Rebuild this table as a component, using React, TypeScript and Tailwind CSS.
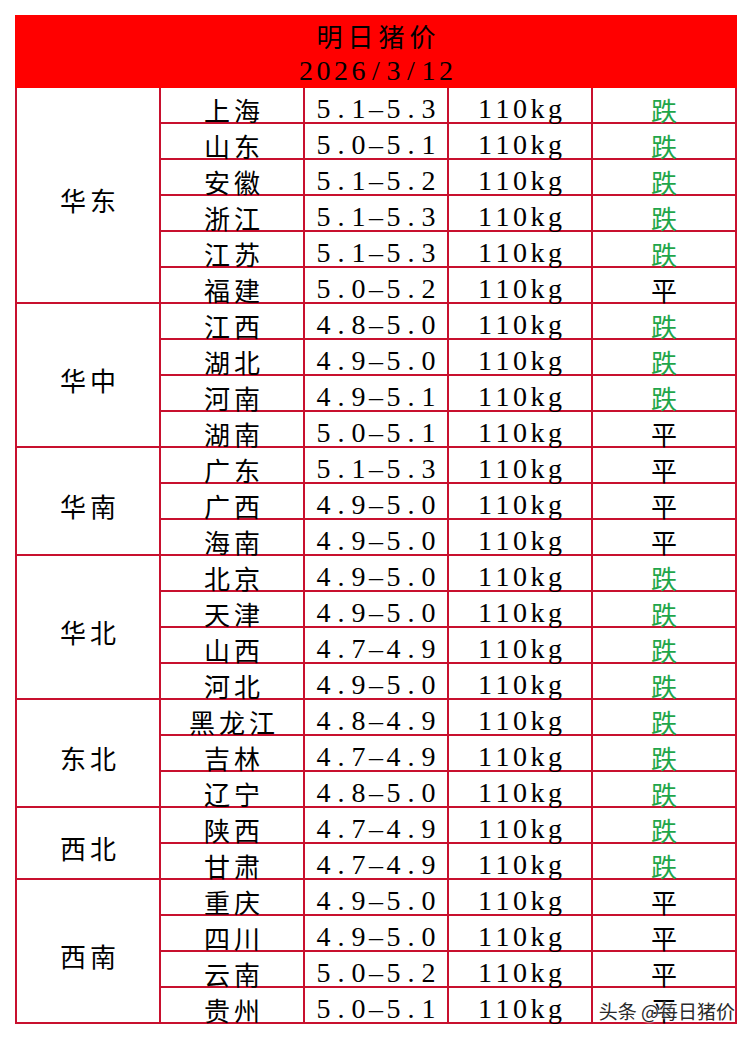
import React from "react"

type Row = { p: string; price: string; trend: "跌" | "平" }
type Region = { name: string; rows: Row[] }

const data: Region[] = [
  {
    name: "华东",
    rows: [
      { p: "上海", price: "5.1-5.3", trend: "跌" },
      { p: "山东", price: "5.0-5.1", trend: "跌" },
      { p: "安徽", price: "5.1-5.2", trend: "跌" },
      { p: "浙江", price: "5.1-5.3", trend: "跌" },
      { p: "江苏", price: "5.1-5.3", trend: "跌" },
      { p: "福建", price: "5.0-5.2", trend: "平" },
    ],
  },
  {
    name: "华中",
    rows: [
      { p: "江西", price: "4.8-5.0", trend: "跌" },
      { p: "湖北", price: "4.9-5.0", trend: "跌" },
      { p: "河南", price: "4.9-5.1", trend: "跌" },
      { p: "湖南", price: "5.0-5.1", trend: "平" },
    ],
  },
  {
    name: "华南",
    rows: [
      { p: "广东", price: "5.1-5.3", trend: "平" },
      { p: "广西", price: "4.9-5.0", trend: "平" },
      { p: "海南", price: "4.9-5.0", trend: "平" },
    ],
  },
  {
    name: "华北",
    rows: [
      { p: "北京", price: "4.9-5.0", trend: "跌" },
      { p: "天津", price: "4.9-5.0", trend: "跌" },
      { p: "山西", price: "4.7-4.9", trend: "跌" },
      { p: "河北", price: "4.9-5.0", trend: "跌" },
    ],
  },
  {
    name: "东北",
    rows: [
      { p: "黑龙江", price: "4.8-4.9", trend: "跌" },
      { p: "吉林", price: "4.7-4.9", trend: "跌" },
      { p: "辽宁", price: "4.8-5.0", trend: "跌" },
    ],
  },
  {
    name: "西北",
    rows: [
      { p: "陕西", price: "4.7-4.9", trend: "跌" },
      { p: "甘肃", price: "4.7-4.9", trend: "跌" },
    ],
  },
  {
    name: "西南",
    rows: [
      { p: "重庆", price: "4.9-5.0", trend: "平" },
      { p: "四川", price: "4.9-5.0", trend: "平" },
      { p: "云南", price: "5.0-5.2", trend: "平" },
      { p: "贵州", price: "5.0-5.1", trend: "平" },
    ],
  },
]

const spans: Record<number, string> = {
  2: "row-span-2",
  3: "row-span-3",
  4: "row-span-4",
  6: "row-span-6",
}

const cjk = "font-['Noto_Sans_CJK_SC',sans-serif]"

// fixed-width slots, like the half-width SimSun digits in the sheet
function Mono({ text }: { text: string }) {
  return (
    <span className="flex font-['Liberation_Serif',serif] text-[28px] leading-none">
      {text.split("").map((c, i) => (
        <span key={i} className="inline-block w-[17.5px] text-center">
          {c === "-" ? "–" : c}
        </span>
      ))}
    </span>
  )
}

function Cell({ children, className = "text-black" }: { children: React.ReactNode; className?: string }) {
  return (
    <div className={`bg-white flex items-center justify-center pt-[8px] ${className}`}>
      {children}
    </div>
  )
}

export default function App() {
  return (
    <div className="w-[752px] h-[1040px] bg-white pt-[15px] pl-[15px]">
      <div className="relative w-[722px]">
        {/* title */}
        <div className="h-[73px] bg-[#ff0000] flex flex-col items-center justify-center pt-[3px] text-black">
          <div className={`${cjk} text-[26px] leading-[36px] tracking-[5px] pl-[5px]`}>明日猪价</div>
          <div className="h-[36px] flex items-center">
            <Mono text="2026/3/12" />
          </div>
        </div>

        <div className="grid grid-cols-[142px_142px_142px_142px_142px] auto-rows-[34px] gap-[2px] bg-[#c8102e] px-[2px] pb-[2px]">
          {data.map((region) => (
            <React.Fragment key={region.name}>
              <Cell className={`${spans[region.rows.length]} ${cjk} text-black text-[26px] tracking-[4px] pl-[4px]`}>
                {region.name}
              </Cell>
              {region.rows.map((r) => (
                <React.Fragment key={r.p}>
                  <Cell className={`${cjk} text-black text-[26px] tracking-[4px] pl-[4px]`}>{r.p}</Cell>
                  <Cell>
                    <Mono text={r.price} />
                  </Cell>
                  <Cell>
                    <Mono text="110kg" />
                  </Cell>
                  <Cell className={`${cjk} text-[26px] ${r.trend === "跌" ? "text-[#1fa64a]" : "text-black"}`}>
                    {r.trend}
                  </Cell>
                </React.Fragment>
              ))}
            </React.Fragment>
          ))}
        </div>

        {/* watermark */}
        <div
          className={`absolute right-[2px] bottom-[1px] ${cjk} text-[19px] leading-[24px] text-[#2a2a2a] [text-shadow:0_0_2px_#fff,0_0_2px_#fff]`}
        >
          头条 @每日猪价
        </div>
      </div>
    </div>
  )
}
